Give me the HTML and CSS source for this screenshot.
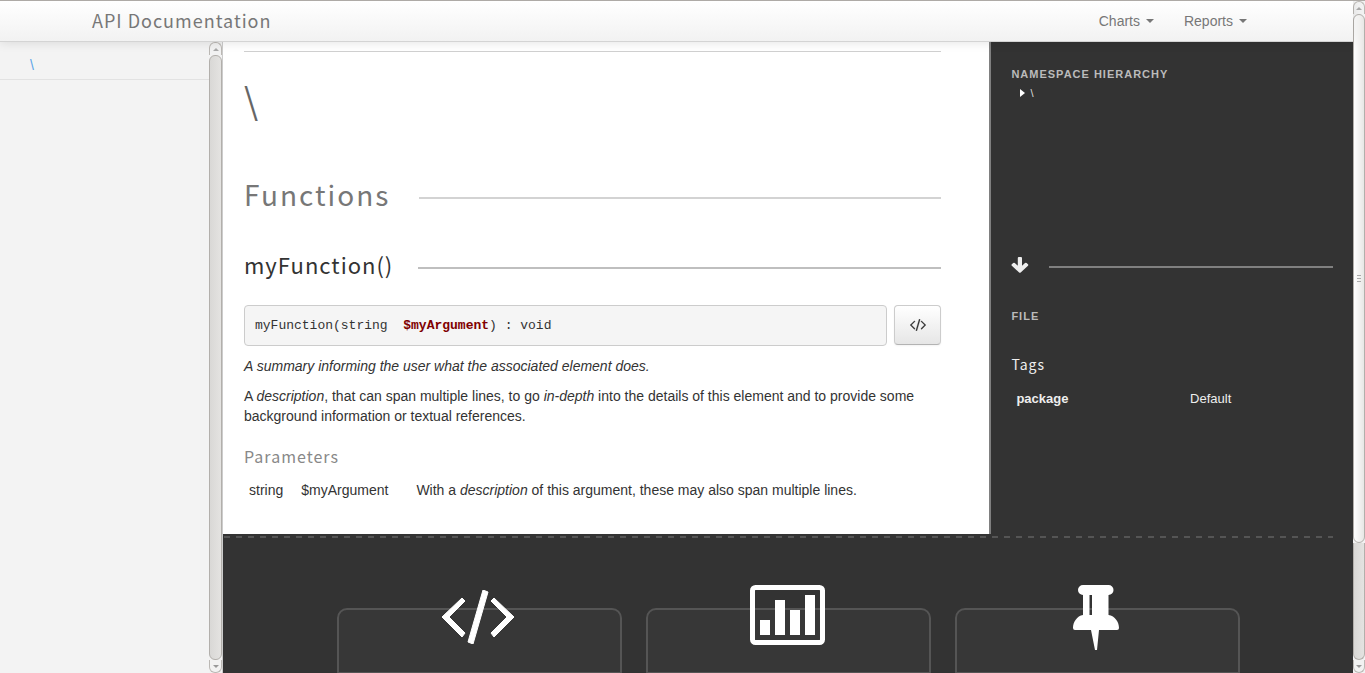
FILE: index.html
```html
<!DOCTYPE html>
<html lang="en">
<head>
<meta charset="utf-8">
<title>API Documentation</title>
<link rel="stylesheet" href="styles.css">
</head>
<body>
<div class="window">
  <div class="page">
    <header class="navbar">
      <a class="brand" href="#">API Documentation</a>
      <nav class="menu">
        <button class="menu-item" type="button">Charts <span class="caret"></span></button>
        <button class="menu-item" type="button">Reports <span class="caret"></span></button>
      </nav>
    </header>
    <div class="columns">
      <nav class="sidebar">
        <a class="sidebar-link" href="#">\</a>
      </nav>
      <div class="scrollbar scrollbar-side">
        <span class="arrow-up"></span>
        <span class="track-full"></span>
        <span class="arrow-down"></span>
      </div>
      <div class="content">
        <div class="detail">
          <main class="main">
            <h1 class="title">\</h1>
            <h2 class="section">Functions</h2>
            <h3 class="function">myFunction()</h3>
            <div class="signature-row">
              <pre class="signature">myFunction(string  <b class="argument">$myArgument</b>) : void</pre>
              <button class="source" type="button" aria-label="Source">
                <svg width="16" height="12" viewBox="0 0 72 54"><path d="M20 8 23 11 7 27 23 43 20 47 0 27ZM41 0 46 2 31 54 26 52ZM52 8 72 27 52 47 49 43 65 27 49 11Z" stroke="#333" stroke-width="1"/></svg>
              </button>
            </div>
            <p class="text"><em>A summary informing the user what the associated element does.</em></p>
            <p class="text">A <em>description</em>, that can span multiple lines, to go <em>in-depth</em> into the details of this element and to provide some background information or textual references.</p>
            <h4 class="parameters">Parameters</h4>
            <table class="arguments">
              <tr><td>string</td><td>$myArgument</td><td>With a <em>description</em> of this argument, these may also span multiple lines.</td></tr>
            </table>
          </main>
          <aside class="aside">
            <h2 class="label">Namespace hierarchy</h2>
            <a class="namespace" href="#"><span class="marker"></span>\</a>
            <div class="divider">
              <svg width="18" height="16" viewBox="0 0 18 16"><path d="M6.800 1Q6.800 0 7.800 0H10Q11 0 11 1V8.800L14 6Q14.800 5.300 15.600 6L17 7.200Q17.700 8 17 8.700L9.700 15.500Q8.900 16.200 8.100 15.500L.800 8.700Q0 8 .800 7.200L2.200 6Q3 5.300 3.800 6L6.800 8.800Z"/></svg>
            </div>
            <h2 class="label">File</h2>
            <h3 class="tags">Tags</h3>
            <table class="tag-table">
              <tr><th scope="row">package</th><td>Default</td></tr>
            </table>
          </aside>
        </div>
        <footer class="footer">
          <section class="card">
            <svg class="card-icon" width="72" height="54" viewBox="0 0 72 54"><path d="M20 8 23 11 7 27 23 43 20 47 0 27ZM41 0 46 2 31 54 26 52ZM52 8 72 27 52 47 49 43 65 27 49 11Z" stroke="#fff" stroke-width="1" stroke-linejoin="round"/></svg>
          </section>
          <section class="card">
            <svg class="card-icon" width="75" height="60" viewBox="0 0 75 60"><rect x="2.500" y="2.500" width="70" height="55" rx="3" fill="none" stroke="#fff" stroke-width="5"/><path d="M10 35h10v15H10zM25 15h10v35H25zM40 25h10v25H40zM55 10h10v40H55z"/></svg>
          </section>
          <section class="card">
            <svg class="card-icon" width="46" height="65" viewBox="0 0 46 65"><path fill-rule="evenodd" d="M10 0H35.500A5 5 0 0 1 35.500 10V30C42 31 46 37 46 43Q46 45 44 45H26L24 65H22L18 45H2Q0 45 0 43C0 37 4 31 10 30V10A5 5 0 0 1 10 0ZM16.500 10V30H19V10Z"/></svg>
          </section>
        </footer>
      </div>
    </div>
  </div>
  <div class="scrollbar scrollbar-page">
    <span class="arrow-up"></span>
    <span class="thumb"><i class="grip"></i></span>
    <span class="track"></span>
    <span class="arrow-down"></span>
  </div>
</div>
</body>
</html>
```
FILE: styles.css
```css
* { box-sizing: border-box; }
body {
  margin: 0;
  font: 14px/20px "Liberation Sans", Arial, sans-serif;
  color: #333;
  background: #333;
}
h1, h2, h3, h4, p { margin: 0; font-weight: 400; }
a { text-decoration: none; }
button { font: inherit; cursor: pointer; }
svg { display: block; fill: currentColor; }

.window {
  display: flex;
  height: 100vh;
  overflow: hidden;
  border-top: 1px solid #aeaaa6;
}
.page { flex: 1; min-width: 0; display: flex; flex-direction: column; }

.navbar {
  display: flex;
  flex: none;
  align-items: center;
  justify-content: space-between;
  height: 41px;
  padding: 0 106px 0 92px;
  background: linear-gradient(#fff, #f2f2f2);
  border-bottom: 1px solid #d4d4d4;
  box-shadow: 0 1px 10px rgba(0, 0, 0, .1);
  position: relative;
  z-index: 1;
}
.brand {
  padding-bottom: 2px;
  font: 18px/38px "Noto Sans CJK SC", sans-serif;
  letter-spacing: 1px;
  color: #777;
}
.menu { display: flex; gap: 30px; }
.menu-item {
  display: flex;
  align-items: center;
  gap: 6px;
  padding: 0;
  border: 0;
  background: none;
  color: #777;
}
.caret { border: 4px solid transparent; border-top-color: #777; border-bottom: 0; }

.columns { display: flex; flex: 1; min-height: 0; }
.sidebar { width: 209px; flex: none; background: #f3f3f3; }
.sidebar-link {
  display: block;
  padding: 13px 30px 4px;
  border-bottom: 1px solid #e2e2e2;
  color: #5ba3e8;
}

.scrollbar {
  display: flex;
  flex: none;
  flex-direction: column;
  background: #f2f2f2;
}
.scrollbar-side { width: 14px; border-right: 1px solid #ccc; }
.scrollbar-page { width: 12px; }
.arrow-up, .arrow-down {
  display: flex;
  align-items: center;
  justify-content: center;
  height: 13px;
  flex: none;
  border: 1px solid #bbb8b4;
}
.arrow-up { border-radius: 6px 6px 0 0; border-bottom: 0; }
.arrow-down { border-radius: 0 0 6px 6px; border-top: 0; }
.arrow-up::before, .arrow-down::before { content: ""; border: 3px solid transparent; }
.arrow-up::before { border-bottom-color: #aaa; border-top: 0; }
.arrow-down::before { border-top-color: #999; border-bottom: 0; }
.track-full, .thumb, .track { border: 1px solid #b2afab; }
.track-full { flex: 1; border-radius: 6px; background: linear-gradient(90deg, #d9d8d6, #e4e3e1); }
.thumb {
  display: flex;
  flex: 82;
  align-items: center;
  justify-content: center;
  border-radius: 6px;
  background: linear-gradient(90deg, #fff, #e8e7e5);
}
.track { flex: 18; border-top: 0; border-radius: 0 0 6px 6px; background: linear-gradient(90deg, #d9d8d6, #e4e3e1); }
.grip {
  width: 4px;
  height: 7px;
  background: repeating-linear-gradient(#aaa 0 1px, transparent 1px 3px);
}

.content { flex: 1; min-width: 0; background: #333; }
.detail { display: flex; min-height: 492px; }
.main {
  width: 68%;
  padding: 9px 48px 0 21px;
  background: #fff;
  border-right: 2px solid #808080;
}
.title {
  border-top: 1px solid #d0d0d0;
  padding-top: 17px;
  font: 36px/60px "Noto Sans CJK SC", sans-serif;
  color: #666;
}
.section, .function { display: flex; align-items: center; }
.section::after, .function::after, .divider::after {
  content: "";
  flex: 1;
  height: 2px;
  background: #d3d3d3;
}
.section::after, .function::after { margin-top: 8px; }
.section {
  gap: 29px;
  margin-top: 45px;
  font: 28px/40px "Noto Sans CJK SC", sans-serif;
  letter-spacing: 2px;
  color: #777;
}
.function {
  gap: 25px;
  margin-top: 30px;
  font: 22px/40px "Noto Sans CJK SC", sans-serif;
  letter-spacing: 1px;
}
.function::after { background: #bfbfbf; }
.signature-row { display: flex; gap: 7px; margin: 21px 0 10px; }
.signature {
  flex: 1;
  margin: 0;
  padding: 10px;
  border: 1px solid #ccc;
  border-radius: 4px;
  background: #f5f5f5;
  font: 13px/19px "Liberation Mono", monospace;
}
.argument { color: #800000; }
.source {
  display: flex;
  align-items: center;
  justify-content: center;
  width: 47px;
  height: 40px;
  padding: 0;
  border: 1px solid #ccc;
  border-bottom-color: #b3b3b3;
  border-radius: 4px;
  background: linear-gradient(#fff, #e6e6e6);
  box-shadow: 0 1px 2px rgba(0, 0, 0, .05);
  color: #333;
}
.text { margin-bottom: 10px; }
.parameters {
  margin-top: 20px;
  font: 16px/20px "Noto Sans CJK SC", sans-serif;
  letter-spacing: 1px;
  color: #888;
}
.arguments { margin-top: 9px; border-collapse: collapse; }
.arguments td { padding: 5px 13px 5px 5px; }
.arguments td + td + td { padding-left: 15px; }

.aside { flex: 1; padding: 22px 20px 0; color: #eee; }
.label {
  font-size: 11px;
  font-weight: 700;
  letter-spacing: 1px;
  text-transform: uppercase;
  color: #bbb;
}
.namespace {
  display: flex;
  align-items: center;
  gap: 5px;
  padding-left: 9px;
  font-size: 11px;
  line-height: 18px;
  color: #ddd;
}
.marker { border: 4px solid transparent; border-left: 5px solid #fff; border-right: 0; }
.divider { display: flex; align-items: center; gap: 20px; height: 20px; margin: 155px 0 29px; }
.divider svg { margin-bottom: 4px; }
.divider::after { background: #808080; }
.tags {
  margin-top: 28px;
  font: 14px/20px "Noto Sans CJK SC", sans-serif;
  letter-spacing: 1px;
}
.tag-table { width: 100%; margin-top: 10px; border-collapse: collapse; font-size: 13px; text-align: left; }
.tag-table th, .tag-table td { padding: 5px; }
.tag-table th { width: 54%; }

.footer {
  display: grid;
  grid-template-columns: repeat(3, 1fr);
  gap: 24px;
  margin-right: 20px;
  padding: 74px 93px 0 114px;
  background: repeating-linear-gradient(90deg, #555 0 6px, transparent 6px 12px) 1px 2px / 100% 2px no-repeat;
}
.card {
  height: 65px;
  padding-right: 3px;
  border: 2px solid #555;
  border-bottom-width: 1px;
  border-radius: 10px 10px 0 0;
  background: #373737;
  color: #fff;
}
.card-icon { margin: -25px auto 0; }
.card:first-child .card-icon { margin-top: -20px; }
```
